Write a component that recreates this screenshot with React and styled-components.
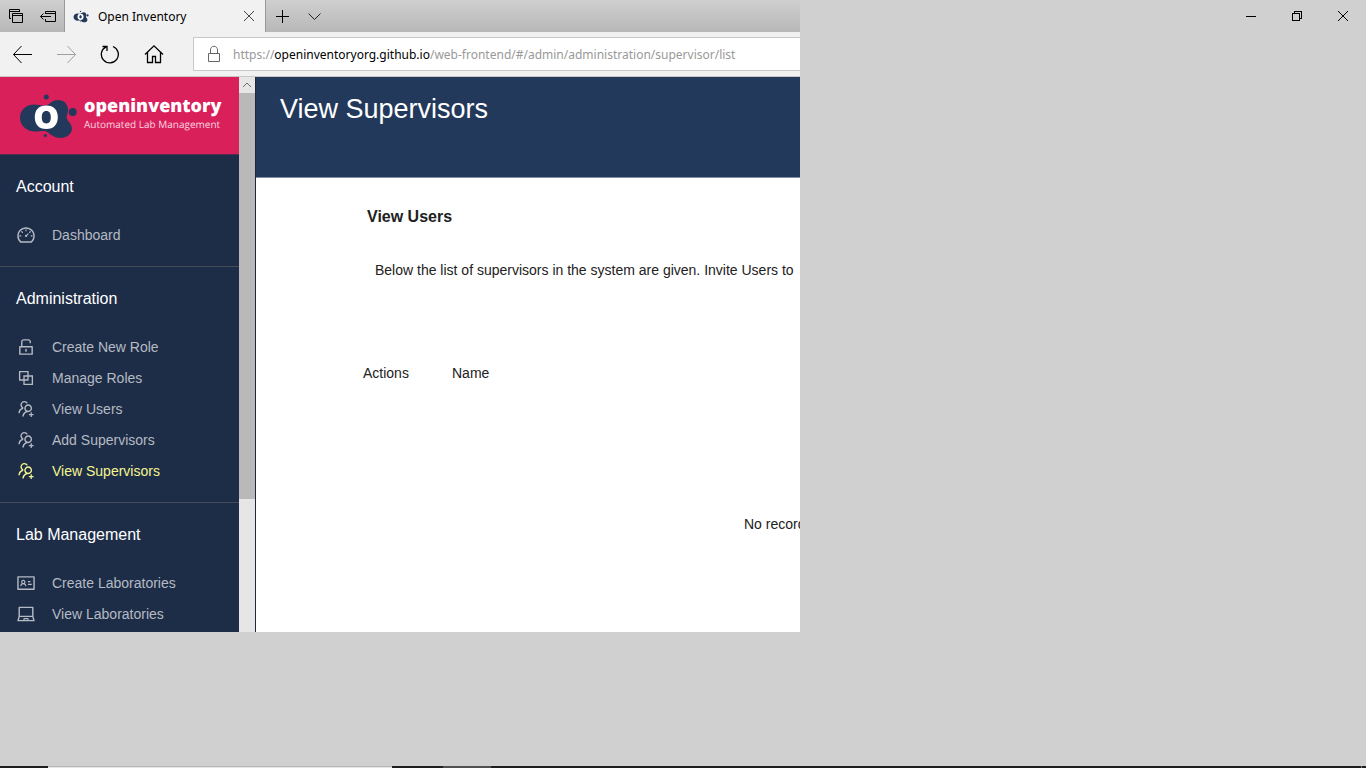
import React from "react";
import styled, { createGlobalStyle } from "styled-components";
import {
  AiOutlineDashboard,
  AiOutlineUnlock,
  AiOutlineBlock,
  AiOutlineUsergroupAdd,
  AiOutlineIdcard,
  AiOutlineLaptop,
} from "react-icons/ai";

const Global = createGlobalStyle`
  *, *::before, *::after { box-sizing: border-box; }
  body { margin: 0; background: #d0d0d0; font-family: "Liberation Sans", Arial, sans-serif; }
  button, input { font: inherit; }
`;

const UI_FONT = `"Noto Sans", "Open Sans", sans-serif`;

const Desktop = styled.div`
  display: flex;
  flex-direction: column;
  min-height: 100vh;
  overflow: hidden;
`;

const Screen = styled.div`
  flex: 1;
  display: flex;
  align-items: flex-start;
  justify-content: space-between;
`;

const Browser = styled.div`
  width: calc(100% * 800 / 1366);
  overflow: hidden;
  background: #f1f1f1;
`;

const IconButton = styled.button`
  flex: none;
  display: flex;
  align-items: center;
  justify-content: center;
  width: ${(p) => p.$width}px;
  height: 32px;
  padding: 0;
  border: 0;
  background: transparent;
  color: ${(p) => p.$color || "#000"};

  svg { display: block; }
`;

const TabStrip = styled.div`
  display: flex;
  height: 32px;
  background: linear-gradient(#cfcfcf, #b8b8b8);
`;

const Tab = styled.div`
  display: flex;
  align-items: center;
  width: 202px;
  padding-left: 8px;
  border: solid #999;
  border-width: 0 1px;
  background: #f1f1f1;
  font: 12px/16px ${UI_FONT};
  color: #000;
`;

const TabTitle = styled.span`
  flex: 1;
  padding: 2px 0 0 9px;
  white-space: nowrap;
`;

const Toolbar = styled.div`
  display: flex;
  align-items: center;
  height: 45px;
  border-bottom: 1px solid #c8c8c8;
`;

const Address = styled.div`
  flex: 1;
  display: flex;
  align-items: center;
  height: 34px;
  margin-left: 17px;
  padding-left: 13px;
  border: 1px solid #c8c8c8;
  border-right: 0;
  background: #fff;
  color: #666;
`;

const Url = styled.a`
  padding: 2px 0 0 12px;
  font: 12px/16px ${UI_FONT};
  color: #999;
  text-decoration: none;
  white-space: nowrap;

  strong { font-weight: 400; color: #000; }
`;

const Page = styled.div`
  display: flex;
`;

const Sidebar = styled.aside`
  flex: none;
  width: 239px;
  background: #1d2d47;
`;

const Brand = styled.a`
  display: flex;
  align-items: center;
  height: 78px;
  padding-left: 18px;
  border-bottom: 1px solid #4f2e50;
  background: #d9205b;
  color: #fff;
  text-decoration: none;
`;

const BrandText = styled.span`
  display: flex;
  flex-direction: column;
  padding: 0 0 4px 6px;
  font-family: "Open Sans", sans-serif;
  white-space: nowrap;
`;

const BrandName = styled.span`
  font-size: 18px;
  line-height: 20px;
  font-weight: 800;
  text-rendering: geometricPrecision;
`;

const BrandTagline = styled.span`
  font-size: 10px;
  line-height: 16px;
  color: #f9d4e0;
  text-rendering: geometricPrecision;
`;

const Section = styled.section`
  padding: 16px 0;
  border-bottom: 1px solid #454c58;

  &:last-child { padding-bottom: 3px; border-bottom: 0; }
`;

const SectionTitle = styled.h2`
  margin: 0 0 16px;
  padding-left: 16px;
  font-size: 16px;
  line-height: 32px;
  font-weight: 400;
  color: #fff;
`;

const NavLink = styled.a`
  display: flex;
  align-items: center;
  gap: 16px;
  height: 31px;
  padding-left: 16px;
  font-size: 14px;
  line-height: 16px;
  color: ${(p) => (p.$active ? "#f5f58e" : "#b5bac3")};
  text-decoration: none;

  svg { display: block; width: 20px; height: 20px; }
`;

const Scrollbar = styled.div`
  flex: none;
  display: flex;
  flex-direction: column;
  width: 17px;
  border-right: 1px solid #1d2740;
  background: #e6e6e6;
`;

const ScrollUp = styled.button`
  display: flex;
  align-items: center;
  justify-content: center;
  height: 16px;
  padding: 0;
  border: 0;
  background: #e6e6e6;
  color: #707070;
`;

const Thumb = styled.div`
  height: 406px;
  background: #b9b9b9;
`;

const Main = styled.main`
  flex: 1;
  min-width: 0;
  overflow: hidden;
  background: #fff;
  color: #212121;
  white-space: nowrap;
`;

const PageHeader = styled.header`
  height: 101px;
  padding: 12px 24px;
  border-bottom: 1px solid #8390a5;
  background: #23395b;
`;

const PageTitle = styled.h1`
  margin: 0;
  font-size: 27px;
  line-height: 40px;
  font-weight: 400;
  color: #fff;
`;

const Content = styled.div`
  padding: 27px 0 0 107px;
`;

const ContentTitle = styled.h2`
  margin: 0;
  padding-left: 4px;
  font-size: 16px;
  line-height: 24px;
  font-weight: 700;
`;

const Intro = styled.p`
  margin: 31px 0 0;
  padding-left: 12px;
  font-size: 14px;
  line-height: 20px;
`;

const Table = styled.table`
  width: 100%;
  margin-top: 65px;
  border-collapse: collapse;
  font-size: 14px;
  line-height: 20px;
  text-align: left;

  th { height: 56px; padding: 0; font-weight: 400; }
  th:first-child { width: 89px; }
  td { height: 230px; padding: 16px 0 0 381px; }
`;

const WindowControls = styled.div`
  display: flex;
`;

const Taskbar = styled.div`
  display: flex;
  height: 2px;
  background: #1f1f21;
`;

const TaskSegment = styled.div`
  width: ${(p) => p.$width}px;
  background: ${(p) => p.$fill};
`;

const TaskEdge = styled.div`
  width: 1px;
  margin: 0 4px 0 auto;
  background: #777;
`;

function Line({ size = 20, d, children, ...rest }) {
  return (
    <svg width={size} height={size} viewBox={`0 0 ${size} ${size}`} fill="none" stroke="currentColor" {...rest}>
      {d && <path d={d} />}
      {children}
    </svg>
  );
}

function LogoMark({ width, height }) {
  return (
    <svg width={width} height={height} viewBox="0 0 60 46" aria-hidden="true">
      <g fill="#23395b">
        <path d="M16 11.500C22 11.500 25 13.500 29 12C33 10 35 7 40 7C46 7 50 11 50 17C50 21 48 23 49 26C50.500 29 54 31 54 36C54 41 48 45 43 45C37 45 33 42 30 39.500C26 36.500 22 39 16 38.500C8 38 2 32 2 25C2 17 8 11.500 16 11.500Z" />
        <circle cx="28.300" cy="4" r="2.500" />
        <circle cx="54.700" cy="19" r="4" />
        <circle cx="27.300" cy="42.500" r="1.600" />
      </g>
      <path
        fill="#fff"
        fillRule="evenodd"
        d="M28.300 12.500C36 12.500 39.800 17 39.800 24.300C39.800 31.500 36 36 28.300 36C20.600 36 16.800 31.500 16.800 24.300C16.800 17 20.600 12.500 28.300 12.500ZM28.300 18C25 18 23.800 20.500 23.800 24.300C23.800 28 25 30.500 28.300 30.500C31.600 30.500 32.800 28 32.800 24.300C32.800 20.500 31.600 18 28.300 18Z"
      />
    </svg>
  );
}

const sections = [
  { title: "Account", items: [["Dashboard", AiOutlineDashboard]] },
  {
    title: "Administration",
    items: [
      ["Create New Role", AiOutlineUnlock],
      ["Manage Roles", AiOutlineBlock],
      ["View Users", AiOutlineUsergroupAdd],
      ["Add Supervisors", AiOutlineUsergroupAdd],
      ["View Supervisors", AiOutlineUsergroupAdd],
    ],
  },
  {
    title: "Lab Management",
    items: [
      ["Create Laboratories", AiOutlineIdcard],
      ["View Laboratories", AiOutlineLaptop],
    ],
  },
];

export default function App() {
  return (
    <Desktop>
      <Global />
      <Screen>
        <Browser>
          <TabStrip>
            <IconButton $width={32} aria-label="Tabs you've set aside">
              <Line size={16}>
                <path d="M3 10.500H1.500V1.500H11.500V4M1.500 3.500H11.500" />
                <path d="M4.500 5.500H14.500V14.500H4.500ZM4.500 7.500H14.500" />
              </Line>
            </IconButton>
            <IconButton $width={32} aria-label="Set these tabs aside">
              <Line size={16}>
                <path d="M5.500 6V3.500H15.500V13.500H5.500V11M5.500 5.500H15.500M0.500 8.500H11M3.500 5.500L0.500 8.500L3.500 11.500" />
              </Line>
            </IconButton>
            <Tab>
              <LogoMark width={16} height={13} />
              <TabTitle>Open Inventory</TabTitle>
              <IconButton $width={32} $color="#444" aria-label="Close tab">
                <Line size={12} d="M1 1L11 11M11 1L1 11" />
              </IconButton>
            </Tab>
            <IconButton $width={32} aria-label="New tab">
              <Line size={14} d="M7.500 1V14M1 7.500H14" />
            </IconButton>
            <IconButton $width={32} $color="#222" aria-label="Tab previews">
              <Line size={14} d="M1.500 4.500L7.500 10.500L13.500 4.500" />
            </IconButton>
          </TabStrip>

          <Toolbar>
            <IconButton $width={44} aria-label="Back">
              <Line size={20} d="M1.500 10.500H20M9.500 2L1.500 10.500L9.500 19" />
            </IconButton>
            <IconButton $width={44} $color="#a0a0a0" aria-label="Forward">
              <Line size={20} d="M1 10.500H19.500M11.500 2L19.500 10.500L11.500 19" />
            </IconButton>
            <IconButton $width={44} aria-label="Refresh">
              <Line size={20} strokeWidth="1.300">
                <path d="M13 2.500A8.500 8.500 0 1 1 6 2.800M2.500 2.500H7V7" />
              </Line>
            </IconButton>
            <IconButton $width={44} aria-label="Home">
              <Line size={20} strokeWidth="1.300" d="M1 10.500L10 1.800L19 10.500M3.500 8.500V18.500H8.500V12.500H11.500V18.500H16.500V8.500" />
            </IconButton>
            <Address>
              <Line size={14} height="18" viewBox="0 0 14 18">
                <path d="M1.500 8.500H12.500V16.500H1.500ZM3.500 8V5C3.500 0 10.500 0 10.500 5V8" />
              </Line>
              <Url href="#/admin/administration/supervisor/list">
                https://<strong>openinventoryorg.github.io</strong>/web-frontend/#/admin/administration/supervisor/list
              </Url>
            </Address>
          </Toolbar>

          <Page>
            <Sidebar>
              <Brand href="#/">
                <LogoMark width={60} height={46} />
                <BrandText>
                  <BrandName>openinventory</BrandName>
                  <BrandTagline>Automated Lab Management</BrandTagline>
                </BrandText>
              </Brand>
              <nav>
                {sections.map((section) => (
                  <Section key={section.title}>
                    <SectionTitle>{section.title}</SectionTitle>
                    {section.items.map(([label, Icon]) => (
                      <NavLink key={label} href="#/" $active={label === "View Supervisors"}>
                        <Icon />
                        {label}
                      </NavLink>
                    ))}
                  </Section>
                ))}
              </nav>
            </Sidebar>
            <Scrollbar>
              <ScrollUp aria-label="Scroll up">
                <Line size={10} d="M1 7L5 3L9 7" />
              </ScrollUp>
              <Thumb />
            </Scrollbar>
            <Main>
              <PageHeader>
                <PageTitle>View Supervisors</PageTitle>
              </PageHeader>
              <Content>
                <ContentTitle>View Users</ContentTitle>
                <Intro>Below the list of supervisors in the system are given. Invite Users to</Intro>
                <Table>
                  <thead>
                    <tr>
                      <th scope="col">Actions</th>
                      <th scope="col">Name</th>
                    </tr>
                  </thead>
                  <tbody>
                    <tr>
                      <td colSpan={2}>No records</td>
                    </tr>
                  </tbody>
                </Table>
              </Content>
            </Main>
          </Page>
        </Browser>

        <WindowControls>
          <IconButton $width={46} aria-label="Minimize">
            <Line size={10} d="M0 5.500H10" shapeRendering="crispEdges" />
          </IconButton>
          <IconButton $width={46} aria-label="Restore">
            <Line size={10} d="M0.500 2.500H7.500V9.500H0.500ZM2.500 2V0.500H9.500V7.500H8" shapeRendering="crispEdges" />
          </IconButton>
          <IconButton $width={46} aria-label="Close">
            <Line size={10} d="M0 0L10 10M10 0L0 10" />
          </IconButton>
        </WindowControls>
      </Screen>
      <Taskbar>
        <TaskSegment $width={48} $fill="#1f1f21" />
        <TaskSegment $width={344} $fill="linear-gradient(#b8b8b8 50%, #e6e6e6 50%)" />
        <TaskSegment $width={51} $fill="#1f1f21" />
        <TaskSegment $width={48} $fill="#505050" />
        <TaskEdge />
      </Taskbar>
    </Desktop>
  );
}
